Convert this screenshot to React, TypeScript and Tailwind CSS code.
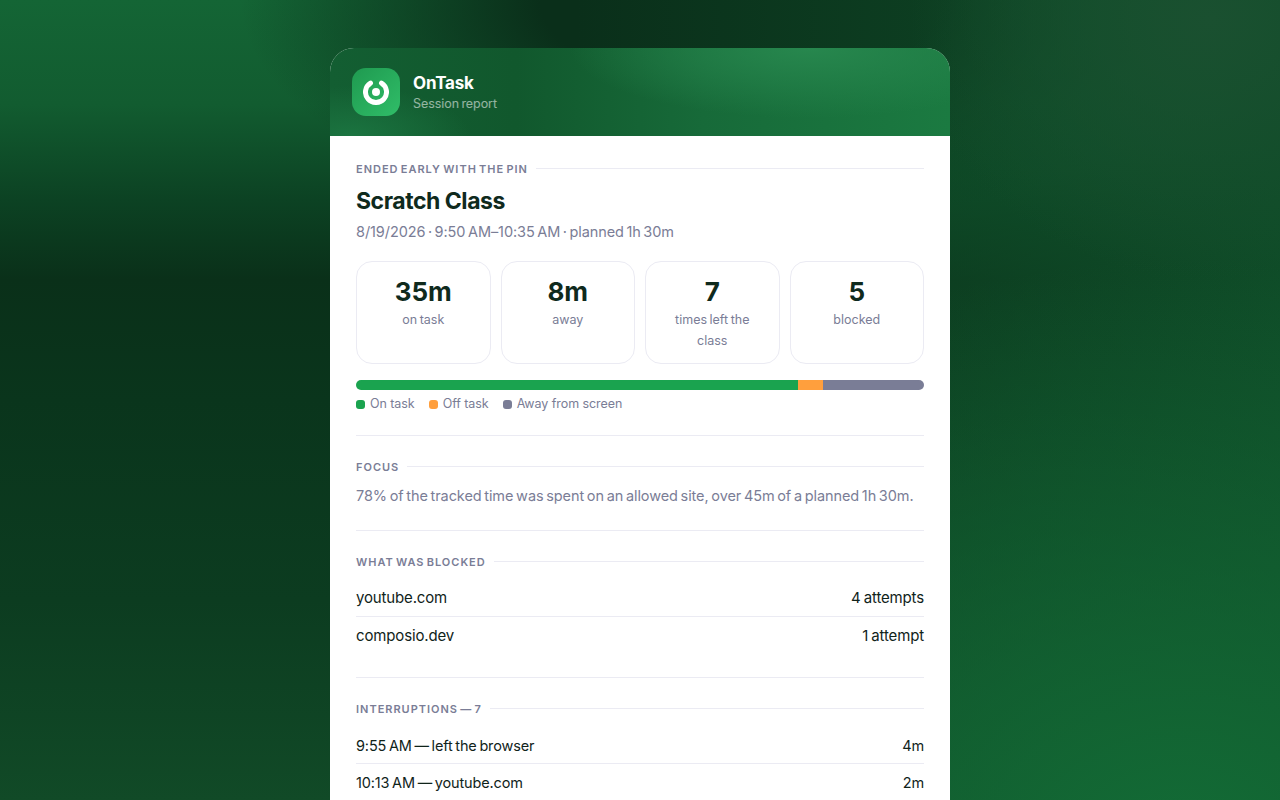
import React from "react";

const stats = [
  { value: "35m", label: "on task" },
  { value: "8m", label: "away" },
  { value: "7", label: "times left the class" },
  { value: "5", label: "blocked" },
];

const segments = [
  { minutes: 35, color: "bg-[#1aa34f]" },
  { minutes: 2, color: "bg-[#ff9f3d]" },
  { minutes: 8, color: "bg-[#7a7d96]" },
];

const legend = [
  { label: "On task", color: "bg-[#1aa34f]" },
  { label: "Off task", color: "bg-[#ff9f3d]" },
  { label: "Away from screen", color: "bg-[#7a7d96]" },
];

const SectionLabel = ({ children }: { children: React.ReactNode }) => (
  <div className="flex items-center gap-2 h-4">
    <span className="pt-[2px] text-[11px] leading-4 font-semibold tracking-[0.09em] [word-spacing:-1.5px] text-[#7a7d96] whitespace-nowrap">
      {children}
    </span>
    <div className="flex-1 h-px bg-[#ebebf3]" />
  </div>
);

const Row = ({ left, right, border, className }: { left: string; right: string; border?: boolean; className: string }) => (
  <div className={`flex justify-between items-center h-[37px] pt-px tracking-[-0.01em] text-[#10231a] ${className} ${border ? "border-b border-[#ebebf3]" : ""}`}>
    <span>{left}</span>
    <span>{right}</span>
  </div>
);

const App = () => {
  const total = segments.reduce((sum, s) => sum + s.minutes, 0);

  return (
    <div className="relative h-screen overflow-hidden bg-[linear-gradient(180deg,#146535_0%,#125c30_13%,#0c4223_25%,#0a3019_35%,#0a351c_50%,#0c3c20_75%,#114a27_100%)] font-['Inter','Noto_Sans',sans-serif]">
      {/* Background glow */}
      <div className="absolute inset-0 bg-[radial-gradient(ellipse_750px_600px_at_1180px_860px,#136c36_0%,#136c3600_100%),radial-gradient(ellipse_300px_260px_at_1210px_20px,#1a5030_0%,#1a503000_100%),linear-gradient(90deg,#0f4c2800_45%,#0f4c28_100%),radial-gradient(ellipse_500px_230px_at_740px_0px,#0a2f1a_40%,#0a2f1a00_100%)]" />

      <div className="relative flex justify-center pt-12">
        <div className="w-[620px] rounded-t-3xl overflow-hidden bg-white">
          {/* Header */}
          <div className="flex items-center gap-[13px] h-[88px] px-[22px] bg-[radial-gradient(ellipse_240px_70px_at_480px_0px,#27874e_0%,#27874e00_100%),radial-gradient(ellipse_120px_50px_at_20px_88px,#1b7440_0%,#1b744000_100%),linear-gradient(90deg,#135e32_0%,#11582d_30%,#176a39_60%,#1b7a41_100%)]">
            <div className="flex items-center justify-center w-12 h-12 rounded-[14px] bg-[linear-gradient(135deg,#1f9a50,#30bd68)]">
              <svg width="26" height="26" viewBox="0 0 26 26" fill="none">
                <path d="M7.5 4.06A10.5 10.5 0 1 0 18.5 4.06" stroke="white" strokeWidth="5" strokeLinecap="round" />
                <circle cx="13" cy="13" r="4" fill="white" />
              </svg>
            </div>
            <div className="-mt-px">
              <div className="text-[17px] leading-6 font-bold tracking-[-0.01em] text-white">OnTask</div>
              <div className="text-[12.5px] leading-[18px] tracking-[-0.005em] [word-spacing:-1px] text-white/55">Session report</div>
            </div>
          </div>

          {/* Summary */}
          <div className="px-[26px] pt-6">
            <SectionLabel>ENDED EARLY WITH THE PIN</SectionLabel>
            <h1 className="mt-[10px] text-[23px] leading-[30px] font-bold tracking-[-0.02em] text-[#0f2a1d]">Scratch Class</h1>
            <p className="mt-[6px] text-[14.5px] leading-5 tracking-[-0.006em] [word-spacing:-1.4px] text-[#7a7d96]">
              8/19/2026 · 9:50 AM–10:35 AM · planned 1h 30m
            </p>

            <div className="grid grid-cols-4 gap-[10px] mt-[19px]">
              {stats.map((s) => (
                <div key={s.label} className="h-[103px] px-4 pt-[14px] rounded-2xl border border-[#ebebf3] text-center">
                  <div className="text-[26px] leading-8 font-bold text-[#0f2a1d]">{s.value}</div>
                  <div className="mt-px text-[12.5px] leading-[21px] [word-spacing:-1px] text-[#7a7d96]">{s.label}</div>
                </div>
              ))}
            </div>

            <div className="flex h-[10px] mt-4 rounded-full overflow-hidden">
              {segments.map((s) => (
                <div key={s.color} className={s.color} style={{ width: `${(s.minutes / total) * 100}%` }} />
              ))}
            </div>

            <div className="flex gap-[14px] mt-[6px]">
              {legend.map((l) => (
                <div key={l.label} className="flex items-center gap-[5px] text-[12.5px] leading-4 tracking-[-0.005em] text-[#7a7d96]">
                  <span className={`w-[9px] h-[9px] rounded-[3px] ${l.color}`} />
                  {l.label}
                </div>
              ))}
            </div>

            <div className="h-px bg-[#ebebf3] mt-[23px]" />
          </div>

          {/* Focus */}
          <div className="px-[26px] pt-[22px]">
            <SectionLabel>FOCUS</SectionLabel>
            <p className="mt-3 text-[14.5px] leading-5 tracking-[-0.006em] [word-spacing:-1.25px] text-[#7a7d96] whitespace-nowrap">
              78% of the tracked time was spent on an allowed site, over 45m of a planned 1h 30m.
            </p>
            <div className="h-px bg-[#ebebf3] mt-6" />
          </div>

          {/* Blocked */}
          <div className="px-[26px] pt-[22px]">
            <SectionLabel>WHAT WAS BLOCKED</SectionLabel>
            <div className="mt-[11px]">
              <Row left="youtube.com" right="4 attempts" border className="text-[15px] [word-spacing:-1px]" />
              <Row left="composio.dev" right="1 attempt" className="text-[15px] [word-spacing:-1px]" />
            </div>
            <div className="h-px bg-[#ebebf3] mt-[23px]" />
          </div>

          {/* Interruptions */}
          <div className="px-[26px] pt-[22px]">
            <SectionLabel>INTERRUPTIONS — 7</SectionLabel>
            <div className="mt-[11px]">
              <Row left="9:55 AM — left the browser" right="4m" border className="text-[14.5px] [word-spacing:-1.2px]" />
              <Row left="10:13 AM — youtube.com" right="2m" className="text-[14.5px] [word-spacing:-1.2px]" />
            </div>
          </div>
        </div>
      </div>
    </div>
  );
};

export default App;
